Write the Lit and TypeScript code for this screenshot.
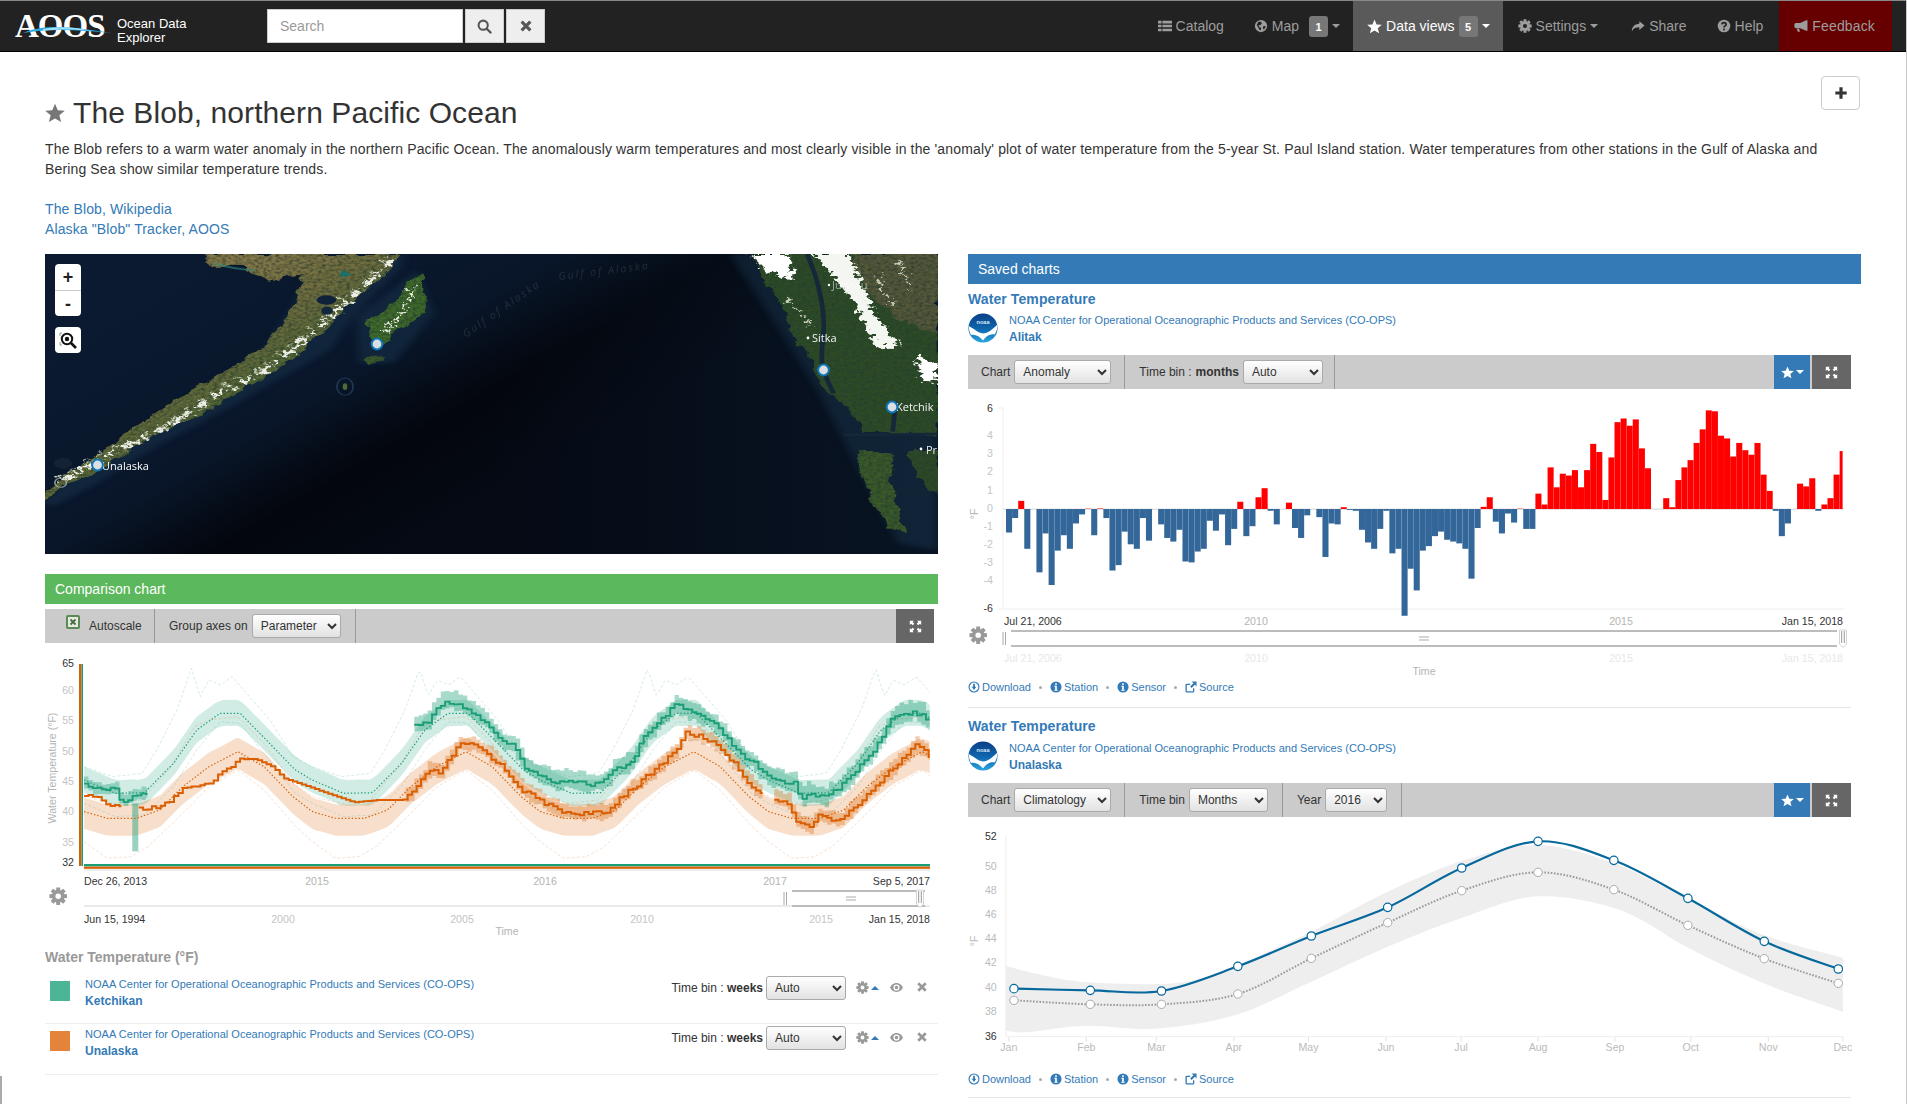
import { LitElement, html, svg, css, nothing } from 'lit';
import { customElement } from 'lit/decorators.js';

type Pt = [number, number];

const FONT = css`'Liberation Sans', Arial, sans-serif`;

// --- path helpers ---

const interp = (pts: Pt[], x: number) => {
  if (x <= pts[0][0]) return pts[0][1];
  for (let i = 1; i < pts.length; i++) {
    if (x <= pts[i][0]) {
      const [x0, y0] = pts[i - 1];
      const [x1, y1] = pts[i];
      return y0 + ((y1 - y0) * (x - x0)) / (x1 - x0);
    }
  }
  return pts[pts.length - 1][1];
};

const hash = (i: number) => {
  const s = Math.sin(i * 12.9898) * 43758.5453;
  return s - Math.floor(s);
};

// catmull-rom through the points, as cubic segments
const smooth = (pts: Pt[], move = true) => {
  let d = move ? `M${pts[0][0]} ${pts[0][1]}` : `L${pts[0][0]} ${pts[0][1]}`;
  for (let i = 0; i < pts.length - 1; i++) {
    const p0 = pts[Math.max(0, i - 1)];
    const p1 = pts[i];
    const p2 = pts[i + 1];
    const p3 = pts[Math.min(pts.length - 1, i + 2)];
    const c1x = p1[0] + (p2[0] - p0[0]) / 6;
    const c1y = p1[1] + (p2[1] - p0[1]) / 6;
    const c2x = p2[0] - (p3[0] - p1[0]) / 6;
    const c2y = p2[1] - (p3[1] - p1[1]) / 6;
    d += `C${c1x} ${c1y} ${c2x} ${c2y} ${p2[0]} ${p2[1]}`;
  }
  return d;
};

const area = (top: Pt[], bottom: Pt[]) => smooth(top) + smooth([...bottom].reverse(), false) + 'Z';

const poly = (pts: number[]) => {
  let s = '';
  for (let i = 0; i < pts.length; i += 2) s += `${pts[i]},${pts[i + 1]} `;
  return s;
};

// --- icons ---

const gearPath = () => {
  let d = '';
  const teeth = 8;
  for (let i = 0; i < teeth; i++) {
    const a = (i / teeth) * Math.PI * 2;
    const w = 0.26;
    const pts = [
      [5.4, a - w * 1.35],
      [7.8, a - w * 0.8],
      [7.8, a + w * 0.8],
      [5.4, a + w * 1.35],
    ];
    for (const [r, t] of pts) {
      d += `${d === '' ? 'M' : 'L'}${(8 + r * Math.cos(t)).toFixed(2)} ${(8 + r * Math.sin(t)).toFixed(2)}`;
    }
  }
  return d + 'ZM8 5.6a2.4 2.4 0 1 0 0 4.8a2.4 2.4 0 1 0 0-4.8Z';
};
const GEAR = gearPath();

const icon = (name: string, size = 14, color = 'currentColor') => {
  const body = (() => {
    switch (name) {
      case 'list':
        return svg`<path fill=${color} d="M0 2h4v3H0zM5 2h11v3H5zM0 6.5h4v3H0zM5 6.5h11v3H5zM0 11h4v3H0zM5 11h11v3H5z"/>`;
      case 'globe':
        return svg`<path fill=${color} fill-rule="evenodd" d="M8 1a7 7 0 1 0 0 14A7 7 0 0 0 8 1zM5 3l3 0 1 2-2 2-2 0 1 2 2 1 0 3-2-1-2-4-1-1zM11 8l2 0 0 2-2 2-1-2z"/>`;
      case 'star':
        return svg`<polygon fill=${color} points="8,0.6 10.2,5.8 15.8,6.2 11.5,9.8 12.9,15.2 8,12.3 3.1,15.2 4.5,9.8 0.2,6.2 5.8,5.8"/>`;
      case 'gear':
        return svg`<path fill=${color} fill-rule="evenodd" d=${GEAR}/>`;
      case 'share':
        return svg`<path fill=${color} d="M9.5 2.5 15.5 7.5 9.5 12.5V9.5C5.5 9.5 3 10.5 1 14 1 9 4 5.8 9.5 5.5z"/>`;
      case 'help':
        return svg`<circle cx="8" cy="8" r="7.2" fill=${color}/><path fill="none" stroke="#222" stroke-width="2" d="M5.6 6.2C5.8 3.6 10.4 3.6 10.4 6.2 10.4 8 8 7.8 8 9.8"/><rect x="7" y="11" width="2" height="2" fill="#222"/>`;
      case 'bullhorn':
        return svg`<path fill=${color} d="M14 1.5h1.4v12H14L7 10.5H2.2C1 10.5.4 9.6.4 7.5S1 4.5 2.2 4.5H7zM3.2 11h2.6l1 3.6H4.2z"/>`;
      case 'search':
        return svg`<circle cx="6.6" cy="6.6" r="4.9" fill="none" stroke=${color} stroke-width="2.2"/><path stroke=${color} stroke-width="2.6" stroke-linecap="round" d="M10.4 10.4 14.4 14.4"/>`;
      case 'remove':
        return svg`<path stroke=${color} stroke-width="3.6" d="M3 3 13 13M13 3 3 13"/>`;
      case 'plus':
        return svg`<path fill=${color} d="M6.2 1.5h3.6v4.7h4.7v3.6H9.8v4.7H6.2V9.8H1.5V6.2h4.7z"/>`;
      case 'full':
        return svg`<path fill=${color} d="M1 1h5L4.5 2.6 6.5 4.6 4.6 6.5 2.6 4.5 1 6zM15 1v5L13.4 4.5 11.4 6.5 9.5 4.6 11.5 2.6 10 1zM1 15v-5L2.6 11.5 4.6 9.5 6.5 11.4 4.5 13.4 6 15zM15 15h-5L11.5 13.4 9.5 11.4 11.4 9.5 13.4 11.5 15 10z"/>`;
      case 'download':
        return svg`<circle cx="8" cy="8" r="6.6" fill="none" stroke=${color} stroke-width="1.5"/><path fill=${color} d="M6.8 3.8h2.4v4h2L8 12 4.8 7.8h2z"/>`;
      case 'info':
        return svg`<circle cx="8" cy="8" r="7.4" fill=${color}/><rect x="6.9" y="3" width="2.2" height="2.2" fill="#fff"/><path fill="#fff" d="M5.8 6.4h3.3v5.2h1.1v1.4H5.8v-1.4h1.1V7.8H5.8z"/>`;
      case 'link':
        return svg`<path fill="none" stroke=${color} stroke-width="1.8" d="M11.5 9.5V13.5a1 1 0 0 1-1 1h-8a1 1 0 0 1-1-1v-8a1 1 0 0 1 1-1H7"/><path fill=${color} d="M9 .8h6.4v6.4L13.2 5 8.8 9.4 6.8 7.4 11.2 3z"/>`;
      case 'eye':
        return svg`<path fill=${color} fill-rule="evenodd" d="M8 2.5C12 2.5 15.2 5.5 15.8 8 15.2 10.5 12 13.5 8 13.5S.8 10.5.2 8C.8 5.5 4 2.5 8 2.5zM8 4.2A3.8 3.8 0 1 0 8 11.8 3.8 3.8 0 1 0 8 4.2zM8 5.8A2.2 2.2 0 1 1 8 10.2 2.2 2.2 0 1 1 8 5.8z"/>`;
      default:
        return nothing;
    }
  })();
  return html`<svg class="ico" width=${size} height=${size} viewBox="0 0 16 16">${body}</svg>`;
};

const noaaLogo = () => html`<svg class="noaa" width="30" height="30" viewBox="0 0 30 30">
  <defs>
    <linearGradient id="nb" x1="0" y1="0" x2="0" y2="1">
      <stop offset="0" stop-color="#0a3f86" />
      <stop offset="0.55" stop-color="#0f68b0" />
      <stop offset="1" stop-color="#2aa5e0" />
    </linearGradient>
  </defs>
  <circle cx="15" cy="15" r="14.6" fill="url(#nb)" />
  <path fill="#fff" d="M.8 13C5 15 10 20 15 20.5 20 20.5 25 16 29.3 11.5 29.8 15 28.5 19 26.5 21.5 22 20.5 18 23 15 27.5 12 23.5 7 21 3 22 1.5 19 .6 16 .8 13Z" />
  <text x="15" y="11.4" text-anchor="middle" font-size="5.6" font-weight="700" fill="#d8e8f4">noaa</text>
</svg>`;

// --- chart fragments ---

// range selector drawn under a chart, in page coordinates
const slider = (x1: number, x2: number, top: number, bottom: number, leftH: number, rightH: number, grip: number) => {
  const my = (top + bottom) / 2;
  return svg`
    <path d="M${x1} ${top}H${x2}M${x1} ${bottom}H${x2}" stroke="#bcbcbc" stroke-width="2" fill="none"/>
    <path d="M${grip - 5} ${my - 1.5}h10M${grip - 5} ${my + 1.5}h10" stroke="#aaa" fill="none"/>
    <path d="M${leftH} ${top + 1}v13M${leftH + 2.5} ${top + 1}v13" stroke="#aaa" fill="none"/>
    <path d="M${rightH - 3.5} ${top - 1}h7v14l-3.5 3.5-3.5-3.5z" fill="#fff" stroke="#d4d4d4"/>
    <path d="M${rightH - 1.3} ${top}v12M${rightH + 1.3} ${top}v12" stroke="#999" fill="none"/>
  `;
};

// --- map ---

@customElement('map-view')
export class MapView extends LitElement {
  static styles = css`
    :host {
      display: block;
      position: relative;
      height: 300px;
      background: #060c18;
      overflow: hidden;
      font-family: ${FONT};
    }
    svg.art {
      display: block;
    }
    .art text {
      font-family: 'Open Sans', 'DejaVu Sans', sans-serif;
    }
    .bar {
      position: absolute;
      left: 10px;
      width: 26px;
      background: #fff;
      border-radius: 4px;
      text-align: center;
      font-weight: 700;
      color: #222;
    }
    .zoom {
      top: 10px;
      height: 52px;
    }
    .zoom div {
      height: 26px;
      line-height: 26px;
      font-size: 18px;
    }
    .zoom div + div {
      border-top: 1px solid #ccc;
      height: 25px;
    }
    .find {
      top: 73px;
      height: 26px;
      display: flex;
      align-items: center;
      justify-content: center;
    }
  `;

  render() {
    const labels: [string, number, number, number][] = [
      ['Unalaska', 57, 216, 1],
      ['Sitka', 767, 88, 0.95],
      ['Ketchik', 851, 157, 0.95],
      ['Juneau', 787, 35, 0.55],
      ['Pr', 881, 200, 0.9],
    ];
    const pins: Pt[] = [
      [52.5, 211],
      [332, 90],
      [778.5, 116],
      [847, 153],
    ];
    const snow = 'M40 690 90 640 130 605 175 570 215 535 265 480 300 440 335 405 380 370 420 320 470 250 520 170 565 100 605 30';
    return html`
      <svg class="art" width="893" height="300" viewBox="0 0 893 300">
        <defs>
          <linearGradient id="sea" gradientUnits="userSpaceOnUse" x1="120" y1="20" x2="300" y2="330">
            <stop offset="0" stop-color="#0b1a30" />
            <stop offset="0.5" stop-color="#09162a" />
            <stop offset="0.74" stop-color="#03060c" />
            <stop offset="1" stop-color="#050a14" />
          </linearGradient>
          <linearGradient id="east" x1="0" y1="0" x2="1" y2="0">
            <stop offset="0.5" stop-color="#0a1a2e" stop-opacity="0" />
            <stop offset="1" stop-color="#0b1b2e" stop-opacity="0.6" />
          </linearGradient>
          <linearGradient id="pen" gradientUnits="userSpaceOnUse" x1="300" y1="100" x2="520" y2="300">
            <stop offset="0" stop-color="#85794a" />
            <stop offset="0.5" stop-color="#716e40" />
            <stop offset="1" stop-color="#466230" />
          </linearGradient>
          <filter id="rough" x="-5%" y="-5%" width="110%" height="110%">
            <feTurbulence type="fractalNoise" baseFrequency="0.035" numOctaves="3" seed="4" result="n" />
            <feDisplacementMap in="SourceGraphic" in2="n" scale="22" xChannelSelector="R" yChannelSelector="G" result="d" />
            <feTurbulence type="fractalNoise" baseFrequency="0.14" numOctaves="4" seed="2" result="t" />
            <feColorMatrix in="t" type="matrix" values="0 0 0 0 0.02  0 0 0 0 0.05  0 0 0 0 0.03  1.8 0 0 0 -0.6" result="dark" />
            <feComposite in="dark" in2="d" operator="in" result="td" />
            <feMerge>
              <feMergeNode in="d" />
              <feMergeNode in="td" />
            </feMerge>
          </filter>
          <filter id="snowy" x="-5%" y="-5%" width="110%" height="110%">
            <feTurbulence type="fractalNoise" baseFrequency="0.08" numOctaves="3" seed="9" result="n" />
            <feDisplacementMap in="SourceGraphic" in2="n" scale="34" xChannelSelector="R" yChannelSelector="G" />
          </filter>
          <filter id="halo"><feGaussianBlur stdDeviation="7" /></filter>
        </defs>
        <rect width="893" height="300" fill="url(#sea)" />
        <rect width="893" height="300" fill="url(#east)" />
        <g transform="scale(0.5803 0.3333) translate(-9 -12)">
          <g filter="url(#halo)" fill="#1d3a55" opacity="0.4">
            <polygon points=${poly([0, 760, 60, 670, 165, 545, 300, 395, 390, 290, 450, 130, 460, 60, 630, 12, 620, 60, 540, 200, 500, 300, 440, 360, 320, 480, 200, 590, 100, 700, 20, 770])} />
            <polygon points=${poly([545, 200, 650, 60, 680, 190, 610, 340, 550, 340])} />
            <polygon points=${poly([1190, 12, 1547, 12, 1547, 900, 1480, 880, 1400, 620, 1340, 420, 1290, 280])} />
          </g>
          <g filter="url(#rough)">
            <polygon fill="url(#pen)" points=${poly([285, 12, 616, 12, 610, 50, 570, 110, 525, 175, 495, 235, 435, 325, 385, 385, 325, 445, 275, 495, 220, 535, 172, 580, 130, 625, 90, 675, 40, 705, 10, 755, 10, 720, 55, 665, 115, 595, 160, 540, 220, 465, 295, 390, 345, 335, 385, 285, 425, 205, 445, 130, 455, 70, 420, 80, 395, 95, 345, 50, 290, 50])} />
            <polygon fill="#3f6a2c" points=${poly([565, 215, 600, 170, 640, 90, 660, 70, 662, 190, 620, 240, 590, 285, 568, 262])} />
            <polygon fill="#3b5a2c" points=${poly([560, 322, 595, 318, 590, 335, 562, 345])} />
            <polygon fill="#2f4c27" points=${poly([1225, 12, 1547, 12, 1547, 560, 1490, 548, 1420, 545, 1390, 470, 1345, 400, 1330, 330, 1300, 260, 1280, 170, 1250, 90])} />
            <polygon fill="#56583a" points=${poly([1400, 12, 1547, 12, 1547, 250, 1480, 210, 1430, 130])} />
            <polygon fill="#3a5a2c" points=${poly([1410, 600, 1470, 612, 1465, 700, 1492, 850, 1462, 830, 1430, 740])} />
            <polygon fill="#2e4a28" points=${poly([1500, 600, 1547, 600, 1547, 730, 1512, 680])} />
          </g>
          <g filter="url(#snowy)">
            <path d=${snow} fill="none" stroke="#eef0e8" stroke-width="10" stroke-dasharray="22 12 34 9 10 20" />
            <path d=${snow} transform="translate(-8 -8)" fill="none" stroke="#c8d0b8" stroke-width="6" stroke-dasharray="9 22 5 30" />
            <path d="M590 250 625 190 645 110" fill="none" stroke="#e4eadc" stroke-width="5" stroke-dasharray="14 7" />
            <polygon fill="#fff" points=${poly([1225, 12, 1292, 12, 1300, 90, 1255, 68])} />
            <polygon fill="#f4f6f2" points=${poly([1335, 12, 1395, 12, 1440, 200, 1485, 290, 1442, 292, 1398, 140])} />
            <polygon fill="#fff" points=${poly([1510, 320, 1547, 340, 1547, 400, 1520, 390])} />
            <path d="M1480 30 1500 120M1440 70 1470 170M1290 150 1330 230" stroke="#c8cdb8" stroke-width="6" stroke-dasharray="12 10" />
          </g>
          <path d="M1322 12C1340 80 1355 180 1350 260S1345 350 1368 430M1385 555 1547 552M1475 455 1470 545" fill="none" stroke="#15283a" stroke-width="8" />
          <ellipse cx="494" cy="150" rx="17" ry="14" fill="#10223a" />
          <ellipse cx="495" cy="182" rx="10" ry="12" fill="#14263c" />
          <path d="M520 60l18 14-20 8z" fill="#18716e" />
          <path d="M300 40q40 20 70 20" stroke="#2e8a82" stroke-width="6" fill="none" opacity="0.6" />
          <ellipse cx="526" cy="410" rx="14" ry="26" fill="none" stroke="#20384e" stroke-width="3" />
          <ellipse cx="526" cy="410" rx="4" ry="10" fill="#4c6a36" />
          <circle cx="40" cy="640" r="16" fill="#1a2a3a" opacity="0.6" />
          <ellipse cx="36" cy="698" rx="10" ry="14" fill="none" stroke="#b9c9b0" stroke-width="3" opacity="0.7" />
        </g>
        <g fill="#fff" fill-opacity="0.11" font-size="10.5" letter-spacing="2" font-style="italic">
          <text transform="translate(421 84) rotate(-35)">Gulf of Alaska</text>
          <text transform="translate(514 26) rotate(-7)">Gulf of Alaska</text>
        </g>
        ${labels.map(
          ([t, x, y, o]) => svg`<text x=${x} y=${y} fill="#fff" fill-opacity=${o} font-size="11">${t}</text>`,
        )}
        <circle cx="45" cy="211" r="1.6" fill="#fff" />
        <circle cx="763" cy="84" r="1.4" fill="#fff" />
        <circle cx="784" cy="31" r="1.2" fill="#fff" />
        <circle cx="876" cy="195" r="1.4" fill="#fff" />
        ${pins.map(
          ([x, y]) => svg`<circle cx=${x} cy=${y} r="5.4" fill="#dcdfe2" stroke="#0f75b5" stroke-width="2"/>`,
        )}
      </svg>
      <div class="bar zoom"><div>+</div><div>-</div></div>
      <div class="bar find">
        <svg width="20" height="20" viewBox="0 0 20 20">
          <path d="M2 6V3h2M2 12v3h2" fill="none" stroke="#999" />
          <circle cx="9" cy="9" r="5.2" fill="none" stroke="#111" stroke-width="2" />
          <circle cx="9" cy="9" r="2.2" fill="#111" />
          <path d="M13 13l5 5" stroke="#111" stroke-width="2.6" />
        </svg>
      </div>
    `;
  }
}

// --- comparison chart ---

const GREEN = '#1b9e77';
const ORANGE = '#d95f02';

const cycle = (pts: Pt[]) => (zx: number) => interp(pts, ((zx - 76) % 393 + 393) % 393);

const gMean = cycle([[0, 630], [54, 670], [104, 668], [154, 580], [194, 480], [234, 430], [269, 430], [314, 510], [364, 600], [393, 630]]);
const oMean = cycle([[0, 725], [40, 745], [90, 745], [130, 720], [170, 650], [215, 590], [265, 545], [310, 590], [360, 680], [393, 725]]);
const gMax = cycle([[0, 590], [50, 620], [100, 610], [125, 540], [160, 420], [185, 295], [200, 380], [215, 330], [235, 345], [255, 320], [280, 370], [320, 450], [360, 560], [393, 590]]);
const gMin = cycle([[0, 700], [54, 740], [104, 735], [154, 650], [194, 540], [234, 455], [269, 460], [314, 560], [364, 670], [393, 700]]);
const oMax = cycle([[0, 680], [50, 700], [100, 690], [150, 590], [190, 470], [215, 450], [265, 440], [310, 520], [360, 640], [393, 680]]);
const oMin = cycle([[0, 815], [40, 865], [80, 860], [110, 830], [170, 730], [215, 650], [265, 600], [310, 660], [365, 770], [393, 815]]);

const gTrace: Pt[] = [[76, 640], [90, 655], [105, 660], [130, 660], [135, 690], [150, 690], [160, 680], [185, 670], [645, 465], [670, 460], [680, 410], [705, 395], [725, 405], [745, 430], [770, 460], [790, 510], [815, 530], [835, 590], [860, 620], [890, 635], [915, 630], [950, 645], [975, 630], [985, 605], [1020, 575], [1035, 510], [1060, 470], [1080, 430], [1095, 405], [1120, 425], [1140, 440], [1165, 470], [1190, 520], [1205, 555], [1230, 580], [1240, 605], [1265, 630], [1300, 640], [1310, 690], [1325, 665], [1350, 685], [1385, 640], [1410, 590], [1440, 530], [1470, 440], [1505, 425], [1525, 440], [1533, 465]];
const oTrace: Pt[] = [[76, 675], [100, 685], [125, 705], [140, 705], [170, 712], [190, 715], [220, 695], [250, 650], [290, 645], [320, 600], [340, 568], [370, 567], [400, 590], [420, 625], [470, 655], [540, 697], [580, 690], [625, 690], [650, 650], [670, 600], [690, 610], [720, 525], [750, 525], [790, 580], [830, 660], [880, 710], [910, 730], [975, 730], [1000, 680], [1035, 635], [1065, 590], [1095, 540], [1110, 490], [1140, 500], [1170, 530], [1200, 590], [1230, 660], [1245, 665], [1265, 690], [1290, 700], [1300, 750], [1325, 775], [1340, 740], [1380, 750], [1420, 680], [1460, 610], [1510, 525], [1533, 560]];

const toX = (z: number) => 40 + z / 1.723;
const toY = (z: number) => 570 + z / 3;

const sampled = (fn: (x: number) => number, from: number, to: number, step = 6): Pt[] => {
  const out: Pt[] = [];
  for (let x = from; x <= to; x += step) out.push([toX(x), toY(fn(x))]);
  out.push([toX(to), toY(fn(to))]);
  return out;
};

const linePath = (pts: Pt[]) => pts.map((p, i) => `${i ? 'L' : 'M'}${p[0].toFixed(1)} ${p[1].toFixed(1)}`).join('');

// weekly values as a step line, stepping every 7.6 reference units
const steps = (trace: Pt[], from: number, to: number, seed: number, off = 0) => {
  const pts: Pt[] = [];
  for (let x = from, i = 0; x < to; x += 7.6, i++) {
    const flat = x > 345 && x < 630;
    const j = flat ? 0 : (hash(i + seed) - 0.5) * 13;
    pts.push([toX(x), toY(interp(trace, x) + j + off)]);
  }
  let d = '';
  pts.forEach((p, i) => {
    const nx = i < pts.length - 1 ? pts[i + 1][0] : toX(to);
    d += `${i ? 'L' : 'M'}${p[0].toFixed(1)} ${p[1].toFixed(1)}L${nx.toFixed(1)} ${p[1].toFixed(1)}`;
  });
  return d;
};

const stepBand = (trace: Pt[], from: number, to: number, seed: number, hw: number) => {
  const top: Pt[] = [];
  const bot: Pt[] = [];
  for (let x = from, i = 0; x < to; x += 7.6, i++) {
    const y = interp(trace, x);
    const x0 = toX(x);
    const x1 = toX(Math.min(x + 7.6, to));
    const t = toY(y - hw - hash(i + seed) * hw * 0.8);
    const b = toY(y + hw * 0.7 + hash(i + seed + 50) * hw * 0.7);
    top.push([x0, t], [x1, t]);
    bot.push([x0, b], [x1, b]);
  }
  return linePath([...top, ...bot.reverse()]) + 'Z';
};

@customElement('compare-chart')
export class CompareChart extends LitElement {
  static styles = css`
    :host {
      display: block;
      height: 304px;
    }
    svg {
      display: block;
    }
    text {
      font-family: ${FONT};
      font-size: 10.6px;
      fill: #c4c4c4;
    }
    text.dark {
      fill: #333;
    }
    text.mid {
      fill: #b4b4b4;
    }
  `;

  render() {
    const ticks: [string, number, string][] = [
      ['65', 666.5, 'dark'], ['60', 694, ''], ['55', 724, ''], ['50', 755, ''], ['45', 785, ''],
      ['40', 815, ''], ['35', 846, ''], ['32', 866, 'dark'],
    ];
    const top = (fn: (x: number) => number, d: number) => sampled((x) => fn(x) - d, 76, 1533, 12);
    const bottom = (fn: (x: number) => number, d: number) => sampled((x) => fn(x) + d, 76, 1533, 12);
    const dashed = (fn: (x: number) => number, c: string) =>
      svg`<path d=${linePath(sampled(fn, 76, 1533, 5))} fill="none" stroke=${c} stroke-width="0.7" stroke-opacity="0.28" stroke-dasharray="3 2"/>`;
    const dotted = (fn: (x: number) => number, c: string) =>
      svg`<path d=${linePath(sampled(fn, 76, 1533, 5))} fill="none" stroke=${c} stroke-width="1.2" stroke-dasharray="1.4 2"/>`;
    const xTop: [string, number][] = [['2015', 317], ['2016', 545], ['2017', 775]];
    const xNav: [string, number][] = [['2000', 283], ['2005', 462], ['2010', 642], ['2015', 821]];
    return html`<svg width="893" height="304" viewBox="45 643 893 304">
      <path d=${area(top(gMean, 40), bottom(gMean, 38))} fill=${GREEN} fill-opacity="0.2" />
      <path d=${area(top(oMean, 42), bottom(oMean, 52))} fill=${ORANGE} fill-opacity="0.2" />
      ${dashed(gMax, GREEN)} ${dashed(gMin, GREEN)} ${dashed(oMax, ORANGE)} ${dashed(oMin, ORANGE)}
      <path d=${stepBand(gTrace, 76, 185, 3, 14)} fill=${GREEN} fill-opacity="0.35" />
      <path d=${stepBand(gTrace, 645, 1533, 7, 22)} fill=${GREEN} fill-opacity="0.38" />
      <path d=${stepBand(oTrace, 630, 1245, 11, 18)} fill=${ORANGE} fill-opacity="0.32" />
      <path d=${stepBand(oTrace, 1265, 1533, 13, 18)} fill=${ORANGE} fill-opacity="0.32" />
      <rect x=${toX(159)} y=${toY(700)} width="6" height="48" fill=${GREEN} fill-opacity="0.45" />
      ${dotted(gMean, GREEN)} ${dotted(oMean, ORANGE)}
      <path d=${steps(gTrace, 76, 185, 21)} fill="none" stroke=${GREEN} stroke-width="1.9" />
      <path d=${steps(gTrace, 645, 1533, 5)} fill="none" stroke=${GREEN} stroke-width="1.9" />
      <path d=${steps(oTrace, 76, 140, 31)} fill="none" stroke=${ORANGE} stroke-width="2" />
      <path d=${steps(oTrace, 170, 1245, 9)} fill="none" stroke=${ORANGE} stroke-width="2" />
      <path d=${steps(oTrace, 1265, 1533, 17)} fill="none" stroke=${ORANGE} stroke-width="2" />
      <rect x="79" y="664" width="2.5" height="202" fill=${ORANGE} />
      <rect x="81.5" y="664" width="1.5" height="202" fill=${GREEN} />
      <rect x="84" y="864" width="846" height="2.4" fill=${GREEN} />
      <rect x="84" y="866.6" width="846" height="2.2" fill=${ORANGE} />
      <rect x="84" y="869" width="846" height="2" fill="#eee" />
      ${ticks.map(([t, y, c]) => svg`<text x="74" y=${y} text-anchor="end" class=${c}>${t}</text>`)}
      <text class="mid" transform="translate(56 768) rotate(-90)" text-anchor="middle">Water Temperature (°F)</text>
      <text x="84" y="885" class="dark">Dec 26, 2013</text>
      ${xTop.map(([t, x]) => svg`<text x=${x} y="885" text-anchor="middle" class="mid">${t}</text>`)}
      <text x="930" y="885" text-anchor="end" class="dark">Sep 5, 2017</text>
      <rect x="84" y="905" width="846" height="2" fill="#eaeaea" />
      <rect x="793" y="892" width="128" height="13" fill="#fff" />
      ${slider(792, 925, 891, 906, 784, 920, 851)}
      <text x="84" y="923" class="dark">Jun 15, 1994</text>
      ${xNav.map(([t, x]) => svg`<text x=${x} y="923" text-anchor="middle">${t}</text>`)}
      <text x="930" y="923" text-anchor="end" class="dark">Jan 15, 2018</text>
      <text x="507" y="935" text-anchor="middle" class="mid">Time</text>
      <g transform="translate(49 887) scale(1.15)"><path d=${GEAR} fill="#999" fill-rule="evenodd" /></g>
    </svg>`;
  }
}

// --- anomaly bars ---

const ANOMALY = [
  -1.3, -0.5, 0.45, -2.2, 0, -3.5, -1.35, -4.2, -2.3, -1.45, -2.2, -0.8, -0.3, 0.02, -1.45, 0.03, -0.5, -3.4, -3.1,
  -1.25, -1.95, -2.2, -0.5, -1.75, 0, -0.85, -1.6, -1.8, -1.15, -2.9, -2.95, -2.35, -2.2, -0.65, -1.2, -0.3, -2, -1.1,
  0.4, -1.5, -0.95, 0.65, 1.15, -0.1, -0.85, 0, 0.35, -1.05, -1.6, -0.35, 0, -0.45, -2.65, -0.8, -0.85, 0.1, -0.05,
  -0.1, -1.15, -1.85, -2.2, -1.1, -0.1, -2.45, -2.2, -5.9, -3.3, -4.5, -2.3, -2.05, -1.5, -1.25, -1.7, -1.8, -1.9,
  -2.2, -3.85, -1.05, 0.12, 0.65, -0.7, -1.35, -0.25, -0.75, 0.02, -1.1, -1.1, 0.85, 0.25, 2.3, 1.2, 1.95, 1.85, 2.15,
  1.2, 2.15, 3.6, 3.15, 0.5, 2.85, 4.8, 5.0, 4.6, 4.95, 3.35, 2.25, 0, 0, 0.6, 0.1, 1.6, 2.3, 2.7, 3.65, 4.4, 5.45,
  5.4, 4.05, 3.9, 2.9, 3.65, 3.25, 3.0, 3.65, 1.9, 1.0, -0.1, -1.5, -0.8, 0, 1.4, 1.25, 1.7, -0.1, 0.25, 0.6, 1.9, 3.2,
];

@customElement('anomaly-chart')
export class AnomalyChart extends LitElement {
  static styles = css`
    :host {
      display: block;
      height: 288px;
    }
    svg {
      display: block;
    }
    text {
      font-family: ${FONT};
      font-size: 10.6px;
      fill: #c4c4c4;
    }
    text.dark {
      fill: #333;
    }
    text.mid {
      fill: #b4b4b4;
    }
    text.faint {
      fill: #e8e8e8;
    }
  `;

  render() {
    const base = 509;
    const bw = 6.085;
    const ticks: [string, number, string][] = [
      ['6', 412, 'dark'], ['4', 439, ''], ['3', 457, ''], ['2', 475, ''], ['1', 494, ''], ['0', 512, ''],
      ['-1', 530, ''], ['-2', 548, ''], ['-3', 566, ''], ['-4', 584, ''], ['-6', 612, 'dark'],
    ];
    const labels = (y: number, cls: string, edge: string) => svg`
      <text x="1004" y=${y} class=${edge}>Jul 21, 2006</text>
      <text x="1256" y=${y} text-anchor="middle" class=${cls}>2010</text>
      <text x="1621" y=${y} text-anchor="middle" class=${cls}>2015</text>
      <text x="1843" y=${y} text-anchor="end" class=${edge}>Jan 15, 2018</text>`;
    return html`<svg width="893" height="288" viewBox="968 389 893 288">
      <path d="M1003 408V609H1844M998 408h5M998 609h5" fill="none" stroke="#eee" />
      <rect x="1003" y="508.5" width="841" height="1.6" fill="#e4e4e4" />
      ${ANOMALY.map((v, i) => {
        const h = Math.abs(v) * 18.1;
        const x = 1006 + i * bw;
        const w = i === ANOMALY.length - 1 ? 3 : bw;
        return svg`<rect x=${x.toFixed(2)} y=${v > 0 ? base - h : base} width=${w} height=${h}
          fill=${v > 0 ? '#f00' : '#336699'} stroke="#fff" stroke-opacity="0.1" stroke-width="0.3"/>`;
      })}
      ${ticks.map(([t, y, c]) => svg`<text x="993" y=${y} text-anchor="end" class=${c}>${t}</text>`)}
      <text class="mid" transform="translate(978 514) rotate(-90)" text-anchor="middle">°F</text>
      ${labels(625, 'mid', 'dark')}
      ${slider(1011, 1837, 631, 646, 1003, 1843, 1424)}
      ${labels(662, 'faint', 'faint')}
      <text x="1424" y="675" text-anchor="middle" class="mid">Time</text>
      <g transform="translate(969 626) scale(1.15)"><path d=${GEAR} fill="#999" fill-rule="evenodd" /></g>
    </svg>`;
  }
}

// --- climatology ---

const cx = (z: number) => 960 + z / 1.742;
const cy = (z: number) => 820 + z / 3;
const cpts = (a: number[][]): Pt[] => a.map(([x, y]) => [cx(x), cy(y)]);

const SOLID = cpts([[94, 506], [227, 511], [351, 513], [484, 439], [612, 348], [745, 262], [874, 144], [1007, 64], [1139, 121], [1268, 235], [1401, 364], [1530, 447]]);
const DOTS = cpts([[94, 541], [227, 553], [351, 553], [484, 522], [612, 415], [745, 308], [874, 212], [1007, 157], [1139, 209], [1268, 316], [1401, 416], [1530, 490]]);
const B_TOP = cpts([[80, 438], [130, 460], [210, 485], [350, 492], [420, 475], [490, 430], [612, 335], [745, 215], [880, 120], [1007, 75], [1140, 130], [1270, 240], [1400, 345], [1538, 413]]);
const B_BOT = cpts([[80, 632], [120, 636], [220, 617], [340, 626], [480, 585], [612, 485], [745, 380], [880, 290], [1007, 229], [1150, 270], [1270, 385], [1400, 490], [1538, 575]]);

@customElement('climate-chart')
export class ClimateChart extends LitElement {
  static styles = css`
    :host {
      display: block;
      height: 252px;
    }
    svg {
      display: block;
    }
    text {
      font-family: ${FONT};
      font-size: 10.6px;
      fill: #bbb;
    }
    text.dark {
      fill: #333;
    }
  `;

  render() {
    const yt: [string, number, string][] = [
      ['52', 49, 'dark'], ['50', 139, ''], ['48', 211, ''], ['46', 284, ''], ['44', 356, ''],
      ['42', 428, ''], ['40', 501, ''], ['38', 573, ''], ['36', 649, 'dark'],
    ];
    const xt: [string, number][] = [
      ['Jan', 85], ['Feb', 220], ['Mar', 342], ['Apr', 477], ['May', 607], ['Jun', 742],
      ['Jul', 873], ['Aug', 1007], ['Sep', 1141], ['Oct', 1273], ['Nov', 1408], ['Dec', 1538],
    ];
    return html`<svg width="893" height="252" viewBox="968 817 893 252">
      <path d=${area(B_TOP, B_BOT)} fill="#eee" />
      <path d="M${cx(80)} ${cy(46)}V${cy(650)}H${cx(1538)}" fill="none" stroke="#eee" />
      ${xt.map(([, x]) => svg`<path d="M${cx(x)} ${cy(650)}v5" stroke="#e4e4e4"/>`)}
      <path d=${smooth(DOTS)} fill="none" stroke="#999" stroke-width="2" stroke-dasharray="1.6 1.6" />
      <path d=${smooth(SOLID)} fill="none" stroke="#07689c" stroke-width="2.2" />
      ${DOTS.map(([x, y]) => svg`<circle cx=${x} cy=${y} r="4.2" fill="#fff" stroke="#aaa" stroke-width="1"/>`)}
      ${SOLID.map(([x, y]) => svg`<circle cx=${x} cy=${y} r="4.2" fill="#fff" stroke="#07689c" stroke-width="1.2"/>`)}
      ${yt.map(([t, z, c]) => svg`<text x=${cx(64)} y=${cy(z) + 3.5} text-anchor="end" class=${c}>${t}</text>`)}
      ${xt.map(([t, z]) => svg`<text x=${cx(z)} y=${cy(692)} text-anchor="middle">${t}</text>`)}
      <text transform="translate(978 941) rotate(-90)" text-anchor="middle">°F</text>
    </svg>`;
  }
}

// --- page ---

const NOAA = 'NOAA Center for Operational Oceanographic Products and Services (CO-OPS)';

@customElement('app-root')
export class AppRoot extends LitElement {
  static styles = css`
    :host {
      display: block;
      position: relative;
      height: 1104px;
      overflow: hidden;
      background: #fff;
      color: #333;
      font-family: ${FONT};
      font-size: 14px;
      line-height: 20px;
      border-right: 1px solid #c8c8c8;
      box-sizing: border-box;
    }
    a {
      color: #337ab7;
      text-decoration: none;
    }
    .ico {
      display: block;
      flex: none;
    }
    .edge {
      position: absolute;
      left: 0;
      top: 1076px;
      width: 2px;
      height: 28px;
      background: #aaa;
    }
    /* navbar */
    .nav {
      display: flex;
      align-items: stretch;
      height: 52px;
      box-sizing: border-box;
      background: #222;
      border-top: 1px solid #888;
      border-bottom: 1px solid #000;
      color: #9d9d9d;
    }
    .logo {
      position: relative;
      margin-left: 15px;
      width: 102px;
      flex: none;
      font-family: 'Liberation Serif', serif;
      font-size: 33px;
      font-weight: 700;
      line-height: 50px;
      color: #fff;
      letter-spacing: -1px;
    }
    .logo svg {
      position: absolute;
      left: 0;
      top: 0;
    }
    .brand {
      width: 150px;
      flex: none;
      padding-top: 16px;
      font-size: 13px;
      line-height: 14px;
      color: #fff;
    }
    .search {
      display: flex;
      align-items: flex-start;
      gap: 2px;
      padding-top: 8px;
      flex: none;
    }
    .search .field {
      width: 196px;
      height: 34px;
      box-sizing: border-box;
      background: #fff;
      border: 1px solid #ccc;
      padding: 0 12px;
      line-height: 32px;
      color: #999;
    }
    .search .btn {
      width: 39px;
      height: 34px;
      background: #eee;
      border: 1px solid #ccc;
      box-sizing: border-box;
      display: flex;
      align-items: center;
      justify-content: center;
      color: #555;
    }
    .menu {
      display: flex;
      margin-left: auto;
      padding-right: 14px;
    }
    .item {
      display: flex;
      align-items: center;
      gap: 4px;
      padding: 0 15px;
      white-space: nowrap;
    }
    .item.map {
      padding-right: 13px;
    }
    .item.on {
      background: #5a5a5a;
      color: #fff;
      padding: 0 13px 0 14px;
    }
    .item.set {
      padding-right: 18px;
    }
    .item.fb {
      background: #660000;
      margin-left: 1px;
      padding-right: 17px;
    }
    .item.fb span {
      letter-spacing: 0.15px;
    }
    .badge {
      width: 19px;
      height: 21px;
      margin-left: 6px;
      background: #777;
      color: #fff;
      border-radius: 3px;
      font-size: 11px;
      font-weight: 700;
      line-height: 22px;
      text-align: center;
    }
    .on .badge {
      margin-left: 0;
    }
    .caret {
      width: 0;
      height: 0;
      border-left: 4px solid transparent;
      border-right: 4px solid transparent;
      border-top: 4px solid currentColor;
    }
    /* page */
    .page {
      padding: 0 44px 0 45px;
    }
    .head {
      display: flex;
      justify-content: space-between;
      align-items: flex-start;
      padding: 24px 0 0;
      height: 63px;
      margin-right: 2px;
    }
    h1 {
      display: flex;
      align-items: center;
      gap: 8px;
      margin: 20px 0 0;
      font-size: 30px;
      font-weight: 400;
      line-height: 33px;
      letter-spacing: 0.08px;
      color: #333;
    }
    .add {
      width: 39px;
      height: 34px;
      box-sizing: border-box;
      border: 1px solid #ccc;
      border-radius: 4px;
      display: flex;
      align-items: center;
      justify-content: center;
      color: #333;
    }
    .intro {
      width: 1790px;
      margin: 0 0 20px;
      letter-spacing: 0.145px;
    }
    .refs {
      margin-bottom: 15px;
      letter-spacing: 0.12px;
    }
    .refs a {
      display: block;
    }
    .cols {
      display: grid;
      grid-template-columns: 893px 893px;
      column-gap: 30px;
    }
    .title {
      height: 30px;
      padding-left: 10px;
      line-height: 30px;
      color: #fff;
    }
    .title.green {
      background: #5cb85c;
      margin-top: 20px;
    }
    .title.blue {
      background: #337ab7;
    }
    /* toolbars */
    .tools {
      display: flex;
      height: 34px;
      background: #cbcbcb;
      font-size: 12px;
      line-height: 34px;
      margin-top: 5px;
    }
    .chart-block .tools {
      margin: 10px 10px 0 0;
    }
    .left .tools {
      margin-right: 4px;
    }
    .sec {
      display: flex;
      align-items: center;
      gap: 4px;
      padding: 0 10px;
      border-right: 1px solid #999;
      white-space: nowrap;
    }
    .sec.first {
      padding: 0 13px 0 13px;
    }
    .sec.auto {
      width: 110px;
      box-sizing: border-box;
      padding-left: 21px;
      gap: 9px;
    }
    .sec.wide {
      padding: 0 14px;
    }
    .sec.tight {
      padding-right: 11px;
    }
    .chk {
      width: 14px;
      height: 14px;
      box-sizing: border-box;
      margin-top: -8px;
      border: 2px solid #5b8a57;
      border-radius: 2px;
      background: #e4ece0;
      color: #4a6a48;
      display: flex;
      align-items: center;
      justify-content: center;
    }
    .spacer {
      flex: 1;
    }
    .sel {
      font: 12px ${FONT};
      color: #333;
      height: 24px;
      box-sizing: border-box;
      padding: 0 2px 0 4px;
      border: 1px solid #aaa;
      border-radius: 3px;
      background: linear-gradient(#fff, #e2e2e2);
    }
    .tbtn {
      width: 38px;
      height: 34px;
      margin-left: 2px;
      background: #666;
      color: #fff;
      display: flex;
      align-items: center;
      justify-content: center;
      flex: none;
    }
    .right .tbtn {
      width: 39px;
    }
    .right .tbtn.star {
      width: 36px;
      background: #337ab7;
      gap: 2px;
    }
    /* series list */
    .label {
      margin: 0;
      font-size: 14px;
      font-weight: 700;
      color: #999;
    }
    .series {
      display: flex;
      height: 57px;
      padding-top: 9px;
      box-sizing: border-box;
      border-bottom: 1px solid #eee;
    }
    .series + .series {
      height: 51px;
      padding-top: 2px;
    }
    .swatch {
      width: 20px;
      height: 20px;
      margin: 5px 15px 0 5px;
      flex: none;
    }
    .who {
      font-size: 11px;
      line-height: 17px;
      letter-spacing: 0.03px;
    }
    .who b {
      display: block;
      font-size: 12px;
    }
    .opts {
      margin-left: auto;
      padding-right: 10px;
      display: flex;
      align-items: flex-start;
      font-size: 12px;
      line-height: 24px;
      white-space: nowrap;
      color: #333;
    }
    .opts .sel {
      margin: 0 9.5px 0 3px;
    }
    .opts .ico {
      margin-top: 5px;
    }
    .opts .tri {
      width: 0;
      height: 0;
      margin: 10px 10.5px 0 2.5px;
      border-left: 4px solid transparent;
      border-right: 4px solid transparent;
      border-bottom: 4px solid #337ab7;
    }
    .opts .gap {
      margin-left: 13.5px;
    }
    /* saved charts */
    .name {
      display: block;
      margin-top: 5px;
      font-weight: 700;
      letter-spacing: 0.1px;
      color: #337ab7;
    }
    .src {
      display: flex;
      gap: 11px;
      margin-top: 4px;
      height: 32px;
      font-size: 11px;
      line-height: 17px;
    }
    .src > div {
      margin-top: -1px;
    }
    .src b {
      display: block;
      font-size: 12px;
    }
    .noaa {
      display: block;
      flex: none;
    }
    .links {
      display: flex;
      align-items: center;
      height: 20px;
      font-size: 11px;
      color: #337ab7;
    }
    .links a {
      display: flex;
      align-items: center;
      gap: 2px;
    }
    .links i {
      width: 3px;
      height: 3px;
      margin: 0 8px;
      border-radius: 50%;
      background: #aaa;
    }
    hr {
      margin: 10px 10px 0 0;
      border: 0;
      border-top: 1px solid #e6e6e6;
    }
    hr + .chart-block .name {
      margin-top: 8px;
    }
    hr + .chart-block .src {
      margin-top: 5px;
    }
    hr + .chart-block + hr {
      margin-top: 8px;
    }
  `;

  private sel(options: string[], width: number) {
    return html`<select class="sel" style="width:${width}px">
      ${options.map((o) => html`<option>${o}</option>`)}
    </select>`;
  }

  private navbar() {
    return html`<div class="nav">
      <div class="logo">
        AOOS
        <svg width="102" height="50" viewBox="0 0 102 50">
          <path d="M8 32C30 22 60 26 96 32 66 29 34 27 8 32Z" fill="#27a6e0" />
          <path d="M28 28C44 25 62 26 78 30 60 28 44 28 28 30Z" fill="#9fe0f7" />
        </svg>
      </div>
      <div class="brand">Ocean Data<br />Explorer</div>
      <div class="search">
        <div class="field">Search</div>
        <div class="btn">${icon('search', 15)}</div>
        <div class="btn">${icon('remove', 14)}</div>
      </div>
      <div class="menu">
        <div class="item">${icon('list', 14)}Catalog</div>
        <div class="item map">${icon('globe', 14)}Map <span class="badge">1</span><span class="caret"></span></div>
        <div class="item on">${icon('star', 15)}Data views <span class="badge">5</span><span class="caret"></span></div>
        <div class="item set">${icon('gear', 14)}Settings <span class="caret"></span></div>
        <div class="item">${icon('share', 14)}Share</div>
        <div class="item">${icon('help', 14)}Help</div>
        <div class="item fb">${icon('bullhorn', 14)}<span>Feedback</span></div>
      </div>
    </div>`;
  }

  private links() {
    return html`<div class="links">
      <a href="#">${icon('download', 12)}Download</a><i></i>
      <a href="#">${icon('info', 12)}Station</a><i></i>
      <a href="#">${icon('info', 12)}Sensor</a><i></i>
      <a href="#">${icon('link', 12)}Source</a>
    </div>`;
  }

  private seriesRow(color: string, station: string) {
    return html`<div class="series">
      <div class="swatch" style="background:${color}"></div>
      <div class="who">
        <a href="#">${NOAA}</a>
        <a href="#"><b>${station}</b></a>
      </div>
      <div class="opts">
        <span>Time bin : <b>weeks</b></span>
        ${this.sel(['Auto'], 80)} ${icon('gear', 13, '#999')}
        <span class="tri"></span>
        ${icon('eye', 13, '#999')}
        <span class="gap"></span>
        ${icon('remove', 12, '#999')}
      </div>
    </div>`;
  }

  private toolButtons() {
    return html`<div class="spacer"></div>
      <div class="tbtn star">${icon('star', 13)}<span class="caret"></span></div>
      <div class="tbtn">${icon('full', 13)}</div>`;
  }

  render() {
    return html`
      ${this.navbar()}
      <div class="edge"></div>
      <div class="page">
        <div class="head">
          <h1>${icon('star', 20, '#777')}The Blob, northern Pacific Ocean</h1>
          <div class="add">${icon('plus', 14)}</div>
        </div>
        <p class="intro">
          The Blob refers to a warm water anomaly in the northern Pacific Ocean. The anomalously warm temperatures and
          most clearly visible in the 'anomaly' plot of water temperature from the 5-year St. Paul Island station. Water
          temperatures from other stations in the Gulf of Alaska and Bering Sea show similar temperature trends.
        </p>
        <div class="refs">
          <a href="#">The Blob, Wikipedia</a>
          <a href="#">Alaska "Blob" Tracker, AOOS</a>
        </div>
        <div class="cols">
          <div class="left">
            <map-view></map-view>
            <div class="title green">Comparison chart</div>
            <div class="tools">
              <div class="sec auto">
                <span class="chk">${icon('remove', 8)}</span>Autoscale
              </div>
              <div class="sec wide">Group axes on ${this.sel(['Parameter'], 89)}</div>
              <div class="spacer"></div>
              <div class="tbtn">${icon('full', 13)}</div>
            </div>
            <compare-chart></compare-chart>
            <p class="label">Water Temperature (°F)</p>
            ${this.seriesRow('#4bb596', 'Ketchikan')} ${this.seriesRow('#e3843a', 'Unalaska')}
          </div>
          <div class="right">
            <div class="title blue">Saved charts</div>
            <div class="chart-block">
              <a class="name" href="#">Water Temperature</a>
              <div class="src">
                ${noaaLogo()}
                <div><a href="#">${NOAA}</a><a href="#"><b>Alitak</b></a></div>
              </div>
              <div class="tools">
                <div class="sec first">Chart ${this.sel(['Anomaly'], 97)}</div>
                <div class="sec wide tight">Time bin : <b>months</b> ${this.sel(['Auto'], 80)}</div>
                ${this.toolButtons()}
              </div>
              <anomaly-chart></anomaly-chart>
              ${this.links()}
            </div>
            <hr />
            <div class="chart-block">
              <a class="name" href="#">Water Temperature</a>
              <div class="src">
                ${noaaLogo()}
                <div><a href="#">${NOAA}</a><a href="#"><b>Unalaska</b></a></div>
              </div>
              <div class="tools">
                <div class="sec first">Chart ${this.sel(['Climatology'], 97)}</div>
                <div class="sec wide">Time bin ${this.sel(['Months'], 79)}</div>
                <div class="sec wide">Year ${this.sel(['2016'], 62)}</div>
                ${this.toolButtons()}
              </div>
              <climate-chart></climate-chart>
              ${this.links()}
            </div>
            <hr />
          </div>
        </div>
      </div>
    `;
  }
}
